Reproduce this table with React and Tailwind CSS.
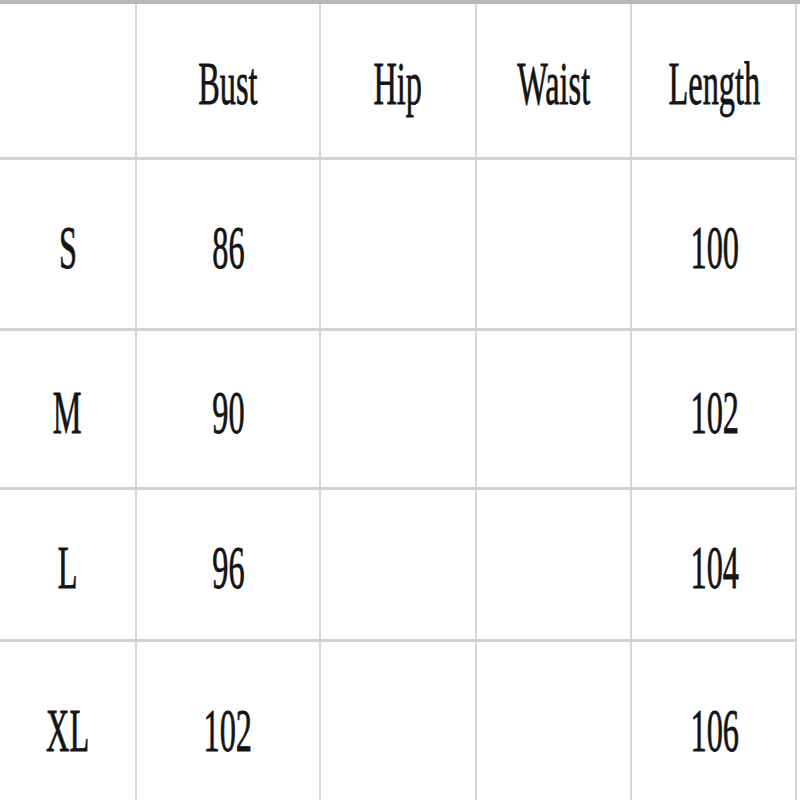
import React from 'react';

const columns = ['', 'Bust', 'Hip', 'Waist', 'Length'];

const rows = [
  { size: 'S', bust: '86', hip: '', waist: '', length: '100' },
  { size: 'M', bust: '90', hip: '', waist: '', length: '102' },
  { size: 'L', bust: '96', hip: '', waist: '', length: '104' },
  { size: 'XL', bust: '102', hip: '', waist: '', length: '106' },
];

const rowHeights = ['h-[153px]', 'h-[168px]', 'h-[156px]', 'h-[149px]', 'h-[170px]'];

const Cell = ({ children, last, height }) => (
  <div
    className={`flex items-center justify-center pt-[6px] ${height} ${
      last ? '' : 'border-r-2 border-[#d6d6d6]'
    }`}
  >
    <span className="inline-block scale-x-[0.53] text-[61px] leading-none text-[#141414] whitespace-nowrap [-webkit-text-stroke:0.8px_#141414]">
      {children}
    </span>
  </div>
);

const App = () => {
  const all = [
    columns,
    ...rows.map((r) => [r.size, r.bust, r.hip, r.waist, r.length]),
  ];

  return (
    <div
      className="w-[800px] h-[800px] overflow-hidden bg-white border-t-4 border-[#b8b8b8]"
      style={{ fontFamily: '"Liberation Serif", serif' }}
    >
      <div className="w-[797px] border-r-2 border-[#d6d6d6]">
        {all.map((row, i) => (
          <div
            key={i}
            className={`grid grid-cols-[137px_184px_156px_155px_165px] ${
              i < all.length - 1 ? 'border-b-[3px] border-[#d2d2d2]' : ''
            }`}
          >
            {row.map((val, j) => (
              <Cell key={j} last={j === row.length - 1} height={rowHeights[i]}>
                {val}
              </Cell>
            ))}
          </div>
        ))}
      </div>
    </div>
  );
};

export default App;
